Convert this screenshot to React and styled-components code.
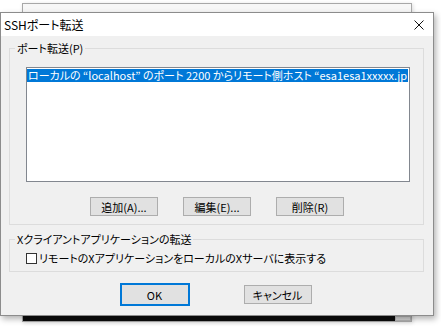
import React from "react";
import styled, { createGlobalStyle } from "styled-components";

const Global = createGlobalStyle`
  html, body { margin: 0; padding: 0; background: #fff; }
  body {
    font-family: "Noto Sans CJK JP", "Noto Sans", sans-serif;
    font-feature-settings: "palt";
    color: #000;
  }
`;

const Desktop = styled.div`
  position: relative;
  width: 441px;
  height: 327px;
  background: #fff;
  overflow: hidden;
`;

const BackWindow = styled.div`
  position: absolute;
  left: 22px;
  top: 3px;
  width: 390px;
  height: 319px;
  box-sizing: border-box;
  border: 1px solid #a8a8a8;
  background: #f7f7f7;
  display: flex;
  flex-direction: column;
  justify-content: flex-end;
  box-shadow: 1px 1px 4px rgba(0, 0, 0, 0.15);
`;

const BackFooter = styled.div`
  display: flex;
  height: 5px;
`;

const BlackBar = styled.div`
  flex: 1;
  background: #0c0c0c;
`;

const GrayTab = styled.div`
  width: 16px;
  box-sizing: border-box;
  background: #d4d4d4;
  border: 1px solid #b4b4b4;
`;

const Dialog = styled.div`
  position: absolute;
  left: 0;
  top: 12px;
  width: 434px;
  height: 304px;
  box-sizing: border-box;
  border: 1px solid #8c8c8c;
  background: #f0f0f0;
  display: flex;
  flex-direction: column;
  box-shadow: 2px 3px 6px rgba(0, 0, 0, 0.3);
`;

const TitleBar = styled.div`
  height: 23px;
  flex: none;
  background: #fff;
  display: flex;
  align-items: center;
  justify-content: space-between;
  padding-left: 3px;
`;

const Title = styled.span`
  font-size: 12px;
  line-height: 14px;
`;

const CloseBox = styled.div`
  width: 28px;
  height: 23px;
  display: flex;
  align-items: center;
  justify-content: center;
`;

const Body = styled.div`
  flex: 1;
  display: flex;
  flex-direction: column;
  padding: 0 9px 0 8px;
`;

const Group = styled.fieldset`
  margin: ${(p) => p.$mt}px 0 0 0;
  padding: 0;
  border: 1px solid #dcdcdc;
  min-width: 0;
`;

const Legend = styled.legend`
  margin-left: 5px;
  padding: 0 2px;
  font-size: 11px;
  line-height: 14px;
  white-space: nowrap;
`;

const GroupInner = styled.div`
  padding: ${(p) => p.$pad};
  display: flex;
  flex-direction: column;
`;

const ListBox = styled.div`
  width: 384px;
  height: 115px;
  box-sizing: border-box;
  border: 1px solid #82878f;
  background: #fff;
  padding: 1px 1px 0 0;
`;

const ListRow = styled.div`
  height: 13px;
  line-height: 13px;
  font-size: 11px;
  white-space: nowrap;
  overflow: hidden;
  padding-left: 1px;
  background: ${(p) => (p.$selected ? "#0078d7" : "transparent")};
  color: ${(p) => (p.$selected ? "#fff" : "#000")};
`;

const ButtonRow = styled.div`
  display: flex;
  justify-content: center;
  gap: ${(p) => p.$gap}px;
  margin: ${(p) => p.$margin};
  align-items: center;
`;

const Button = styled.button`
  width: ${(p) => (p.$default ? 70 : 68)}px;
  height: ${(p) => (p.$default ? 23 : 19)}px;
  box-sizing: border-box;
  padding: 0;
  background: #e1e1e1;
  border: ${(p) => (p.$default ? "2px solid #0078d7" : "1px solid #adadad")};
  font-family: inherit;
  font-feature-settings: "palt";
  font-size: 11px;
  line-height: 14px;
  color: #000;
`;

const CheckRow = styled.label`
  display: flex;
  align-items: center;
  height: 16px;
  gap: 2px;
  font-size: 11px;
  white-space: nowrap;
`;

const CheckBox = styled.span`
  width: 11px;
  height: 11px;
  box-sizing: border-box;
  border: 1px solid #333;
  background: #fff;
  flex: none;
`;

export default function App() {
  return (
    <>
      <Global />
      <Desktop>
        <BackWindow>
          <BackFooter>
            <BlackBar />
            <GrayTab />
          </BackFooter>
        </BackWindow>
        <Dialog>
          <TitleBar>
            <Title>SSHポート転送</Title>
            <CloseBox>
              <svg width="10" height="10" viewBox="0 0 10 10">
                <path d="M0.5 0.5 L9.5 9.5 M9.5 0.5 L0.5 9.5" stroke="#111" strokeWidth="1" fill="none" />
              </svg>
            </CloseBox>
          </TitleBar>
          <Body>
            <Group $mt={5}>
              <Legend>ポート転送(P)</Legend>
              <GroupInner $pad="12px 12px 8px 16px">
                <ListBox>
                  <ListRow $selected>
                    ローカルの “localhost” のポート 2200 からリモート側ホスト “esa1esa1xxxxx.jp
                  </ListRow>
                </ListBox>
                <ButtonRow $gap={25} $margin="15px 3px 0 0">
                  <Button>追加(A)...</Button>
                  <Button>編集(E)...</Button>
                  <Button>削除(R)</Button>
                </ButtonRow>
              </GroupInner>
            </Group>
            <Group $mt={7}>
              <Legend>Xクライアントアプリケーションの転送</Legend>
              <GroupInner $pad="4px 12px 5px 16px">
                <CheckRow>
                  <CheckBox />
                  リモートのXアプリケーションをローカルのXサーバに表示する
                </CheckRow>
              </GroupInner>
            </Group>
            <ButtonRow $gap={54} $margin="11px 2px 0 0">
              <Button $default>OK</Button>
              <Button>キャンセル</Button>
            </ButtonRow>
          </Body>
        </Dialog>
      </Desktop>
    </>
  );
}
